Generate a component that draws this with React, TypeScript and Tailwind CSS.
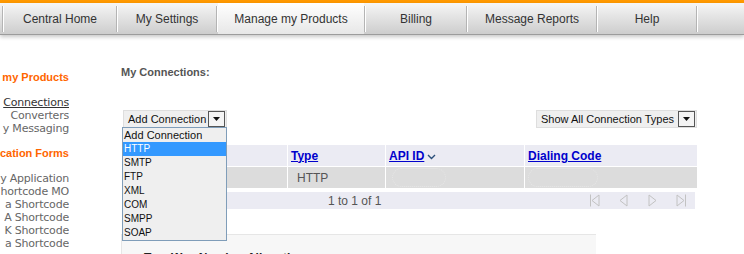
import React from "react";

const tabs = [
  { label: "Central Home", w: "w-[112px]" },
  { label: "My Settings", w: "w-[98px]" },
  { label: "Manage my Products", w: "w-[146px]", active: true },
  { label: "Billing", w: "w-[100px]" },
  { label: "Message Reports", w: "w-[128px]" },
  { label: "Help", w: "w-[98px]" },
];

const Divider = () => (
  <div className="flex h-full shrink-0 items-center">
    <div className="h-[26px] w-px bg-[#b4b4b4]" />
    <div className="h-[26px] w-px bg-white" />
  </div>
);

const SideLine = ({ text, className }: { text: string; className?: string }) => (
  <div className="flex h-[13px] justify-end overflow-hidden whitespace-nowrap leading-[13px] tracking-[-0.2px]">
    <span className={"shrink-0 " + (className ?? "")}>{text}</span>
  </div>
);

const SideHeading = ({ text }: { text: string }) => (
  <div className="flex h-[13px] justify-end overflow-hidden whitespace-nowrap font-['Liberation_Sans',Arial,sans-serif] text-[11px] font-bold leading-[13px] text-[#ff6600]">
    <span className="shrink-0">{text}</span>
  </div>
);

const SelectBox = ({ label, w }: { label: string; w: string }) => (
  <div className={"flex h-[18px] items-center justify-between border border-[#dedede] bg-[#efefef] pl-[4px] pr-px " + w}>
    <span className="text-[11px] leading-none text-[#111]">{label}</span>
    <div className="flex h-[16px] w-[17px] items-center justify-center border border-[#555] bg-[#f4f4f4]">
      <svg width="7" height="4" viewBox="0 0 7 4">
        <path d="M0 0h7L3.5 4z" fill="#111" />
      </svg>
    </div>
  </div>
);

const PageIcon = ({ kind }: { kind: "first" | "prev" | "next" | "last" }) => (
  <svg width="11" height="13" viewBox="0 0 11 13" fill="none" stroke="#c2c2c2" strokeWidth="1">
    {kind === "first" && (
      <>
        <path d="M1.5 0.5v12" />
        <path d="M10 1L3 6.5 10 12z" />
      </>
    )}
    {kind === "prev" && <path d="M9 1L2 6.5 9 12z" />}
    {kind === "next" && <path d="M2 1l7 5.5L2 12z" />}
    {kind === "last" && (
      <>
        <path d="M1 1l7 5.5L1 12z" />
        <path d="M9.5 0.5v12" />
      </>
    )}
  </svg>
);

const options = ["Add Connection", "HTTP", "SMTP", "FTP", "XML", "COM", "SMPP", "SOAP"];

export default function App() {
  return (
    <div className="relative h-[254px] w-[744px] overflow-hidden bg-white font-['Liberation_Sans',Arial,sans-serif]">
      {/* top menu */}
      <div className="h-[3px] bg-[#ff9900]" />
      <div className="flex h-[32px] border-b border-[#9c9c9c] bg-gradient-to-b from-[#f6f6f6] to-[#cdcdcd] shadow-[0_2px_4px_rgba(0,0,0,0.22)]">
        <div className="w-[2px]" />
        <Divider />
        {tabs.map((t) => (
          <React.Fragment key={t.label}>
            <div
              className={
                "flex h-full shrink-0 items-center justify-center text-[12px] text-[#333] " +
                t.w +
                (t.active ? " bg-gradient-to-b from-white to-[#e7e7e7]" : "")
              }
            >
              {t.label}
            </div>
            <Divider />
          </React.Fragment>
        ))}
      </div>

      <div className="flex">
        {/* sidebar, scrolled so only the right part shows */}
        <div className="w-[69px] shrink-0 pt-[36px] font-['DejaVu_Sans',Verdana,sans-serif] text-[11px] text-[#666]">
          <SideHeading text="my Products" />
          <div className="mt-[12px]">
            <SideLine text="Connections" className="text-[#333] underline" />
            <SideLine text="Converters" />
            <SideLine text="y Messaging" />
          </div>
          <div className="mt-[12px]">
            <SideHeading text="cation Forms" />
          </div>
          <div className="mt-[12px]">
            <SideLine text="y Application" />
            <SideLine text="hortcode MO" />
            <SideLine text="a Shortcode" />
            <SideLine text="A Shortcode" />
            <SideLine text="K Shortcode" />
            <SideLine text="a Shortcode" />
          </div>
        </div>

        {/* main */}
        <div className="ml-[52px] w-[576px] shrink-0 pt-[31px]">
          <div className="h-[13px] text-[11px] font-bold leading-[13px] text-[#555]">My Connections:</div>

          <div className="mt-[31px] flex justify-between">
            <div className="relative ml-[2px]">
              <SelectBox label="Add Connection" w="w-[104px]" />
              <div className="absolute left-[-1px] top-[17px] z-10 w-[105px] border border-[#7f9db9] bg-[#efefef]">
                {options.map((o, i) => (
                  <div
                    key={o}
                    className={
                      "h-[14px] pl-px leading-[14px] " +
                      (i === 0 ? "text-[11px] text-[#111]" : "text-[10px] text-[#111]") +
                      (o === "HTTP" ? " bg-[#3399ff] text-white" : "")
                    }
                  >
                    {o}
                  </div>
                ))}
              </div>
            </div>
            <SelectBox label="Show All Connection Types" w="w-[161px]" />
          </div>

          {/* table */}
          <div className="ml-px mt-[17px] w-[575px]">
            <div className="grid h-[21px] grid-cols-[165px_97px_138px_172px] gap-x-px bg-white text-[12px] font-bold text-[#0000cc]">
              <div className="bg-[#ebebf3]" />
              <div className="flex items-center bg-[#ebebf3] pl-[3px]">
                <span className="underline">Type</span>
              </div>
              <div className="flex items-center bg-[#ebebf3] pl-[3px]">
                <span className="underline">API ID</span>
                <svg width="9" height="6" viewBox="0 0 9 6" className="ml-[3px] mt-[2px]">
                  <path d="M1 1l3.5 3.5L8 1" fill="none" stroke="#2a4f7a" strokeWidth="1.4" />
                </svg>
              </div>
              <div className="flex items-center bg-[#ebebf3] pl-[3px]">
                <span className="underline">Dialing Code</span>
              </div>
            </div>
            <div className="mt-px grid h-[21px] grid-cols-[165px_97px_138px_172px] gap-x-px bg-white text-[12px] text-[#555]">
              <div className="bg-[#dcdcdc]" />
              <div className="flex items-center bg-[#dcdcdc] pl-[9px]">HTTP</div>
              <div className="flex items-center bg-[#dcdcdc] pl-[6px]">
                <div className="h-[19px] w-[54px] rounded-full border border-dotted border-[#e6e6e6]" />
              </div>
              <div className="flex items-center bg-[#dcdcdc] pl-[3px]">
                <div className="h-[19px] w-[70px] rounded-full border border-dotted border-[#e6e6e6]" />
              </div>
            </div>
            <div className="mt-[4px] flex h-[17px] w-[573px] items-center bg-[#ebebf3] pl-[206px] pr-[8px] text-[12px] text-[#555]">
              <span>1 to 1 of 1</span>
              <div className="ml-auto flex items-center gap-[18px]">
                <PageIcon kind="first" />
                <PageIcon kind="prev" />
                <PageIcon kind="next" />
                <PageIcon kind="last" />
              </div>
            </div>
          </div>

          {/* lower panel */}
          <div className="mt-[25px] h-[40px] w-[475px] border-l border-t border-[#e6e6e6] bg-[#f7f7f7] pl-[22px] pt-[16px] text-[12px] font-bold leading-[14px] text-[#222]">
            Two-Way Number Allocation
          </div>
        </div>
      </div>
    </div>
  );
}
